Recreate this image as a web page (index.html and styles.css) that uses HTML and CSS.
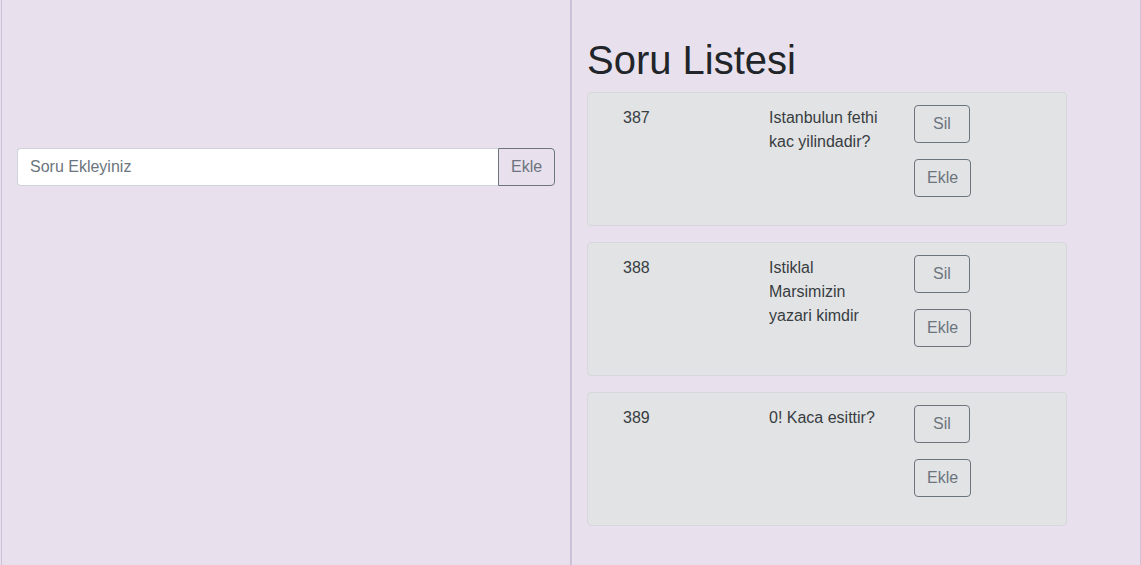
FILE: index.html
```html
<!DOCTYPE html>
<html lang="tr">
<head>
<meta charset="utf-8">
<title>Soru Listesi</title>
<link rel="stylesheet" href="styles.css">
</head>
<body>
<div class="page">
  <section class="panel panel-left">
    <form class="input-group">
      <input class="form-control" type="text" placeholder="Soru Ekleyiniz">
      <button class="btn btn-outline group-btn" type="button">Ekle</button>
    </form>
  </section>
  <section class="panel panel-right">
    <h1 class="title">Soru Listesi</h1>
    <div class="card">
      <div class="col">387</div>
      <div class="col">Istanbulun fethi kac yilindadir?</div>
      <div class="col col-btns">
        <button class="btn btn-outline" type="button">Sil</button>
        <button class="btn btn-outline" type="button">Ekle</button>
      </div>
    </div>
    <div class="card">
      <div class="col">388</div>
      <div class="col">Istiklal Marsimizin yazari kimdir</div>
      <div class="col col-btns">
        <button class="btn btn-outline" type="button">Sil</button>
        <button class="btn btn-outline" type="button">Ekle</button>
      </div>
    </div>
    <div class="card">
      <div class="col">389</div>
      <div class="col">0! Kaca esittir?</div>
      <div class="col col-btns">
        <button class="btn btn-outline" type="button">Sil</button>
        <button class="btn btn-outline" type="button">Ekle</button>
      </div>
    </div>
  </section>
</div>
</body>
</html>
```

FILE: styles.css
```css
* { box-sizing: border-box; }
html, body { margin: 0; padding: 0; }
body {
  font-family: "Liberation Sans", Arial, sans-serif;
  font-size: 16px;
  line-height: 1.5;
  color: #212529;
  background: #e8e1ed;
}
.page {
  display: flex;
  height: 565px;
  padding-left: 1px;
  background: #e8e1ed;
}
.panel {
  border-left: 1px solid #cdc1da;
  border-right: 1px solid #cdc1da;
}
.panel-left {
  width: 570px;
  padding: 148px 15px 0 15px;
}
.panel-right {
  width: 570px;
  padding: 36px 15px 0 15px;
}
.input-group {
  display: flex;
  margin: 0;
}
.form-control {
  flex: 1;
  height: 38px;
  padding: 6px 12px;
  font: inherit;
  color: #495057;
  background: #fff;
  border: 1px solid #ced4da;
  border-right: 0;
  border-radius: 4px 0 0 4px;
  outline: none;
}
.form-control::placeholder { color: #6c757d; opacity: 1; }
.btn {
  display: block;
  font: inherit;
  line-height: 24px;
  padding: 6px 12px;
  height: 38px;
  border-radius: 4px;
  background: transparent;
  cursor: pointer;
}
.btn-outline {
  color: #6c757d;
  border: 1px solid #6c757d;
}
.group-btn {
  border-radius: 0 4px 4px 0;
  width: 57px;
}
.title {
  margin: 0 0 8px 0;
  font-size: 40px;
  line-height: 48px;
  font-weight: 500;
  color: #212529;
}
.card {
  display: flex;
  width: 480px;
  padding: 12px 20px;
  margin-bottom: 16px;
  background: #e2e3e5;
  border: 1px solid #d6d8db;
  border-radius: 4px;
  color: #383d41;
}
.col {
  width: 146px;
  padding: 0 15px;
}
.col:first-child, .col:nth-child(2) { padding-top: 1px; }
.col-btns .btn {
  margin-bottom: 16px;
  margin-left: -1px;
}
.col-btns .btn:first-child { width: 56px; }
.col-btns .btn:last-child { width: 57px; }
```
